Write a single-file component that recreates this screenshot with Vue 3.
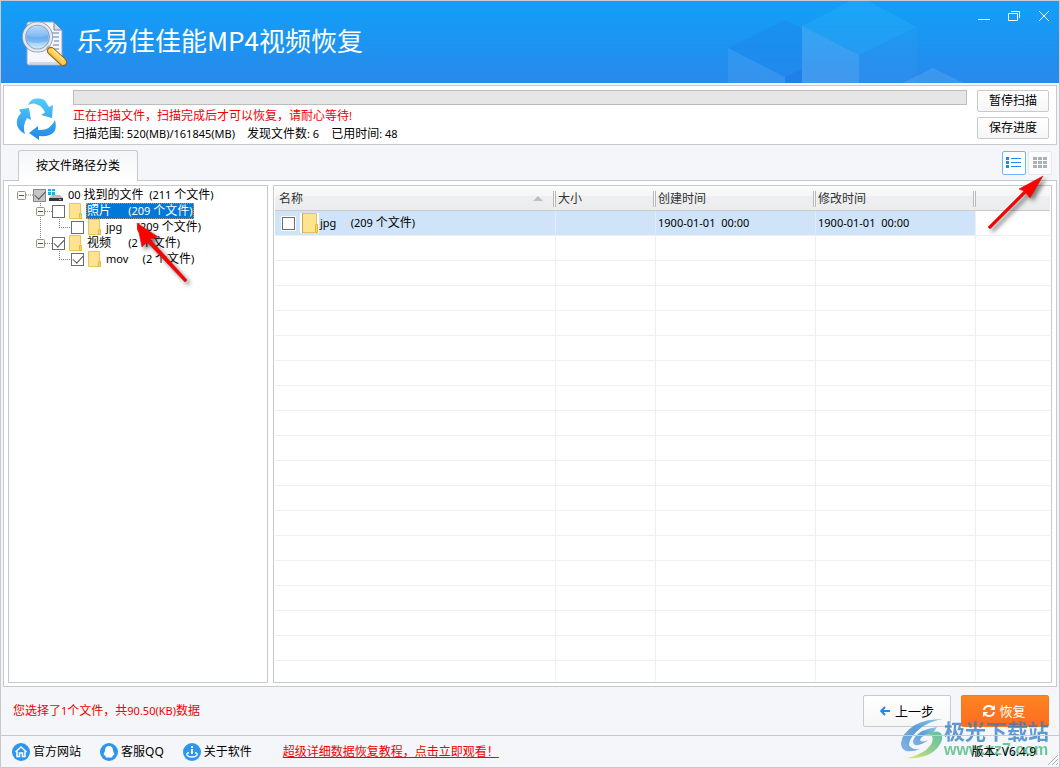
<script setup>
import { h, ref } from 'vue'

// Latin runs are set one size smaller than the Chinese text around them.
const Mixed = (props) =>
  props.text
    .split(/([\x20-\x7e]+)/)
    .filter(Boolean)
    .map((part) => (/^[\x20-\x7e]+$/.test(part) ? h('span', { class: 'latin' }, part) : part))
Mixed.props = ['text']

const tree = ref([
  { id: 'root', label: '00 找到的文件  (211 个文件)', depth: 0, box: true, checked: true, mixed: true, icon: 'drive', lines: 'M9 8H16' },
  { id: 'photo', label: '照片      (209 个文件)', depth: 1, box: true, checked: false, selected: true, icon: 'folder', lines: 'M23.5 0V16M28 8.5H35' },
  { id: 'jpg', label: 'jpg     (209 个文件)', depth: 2, box: false, checked: false, icon: 'folder', lines: 'M23.5 0V16M42.5 0V8M42 8.5H54' },
  { id: 'video', label: '视频      (2 个文件)', depth: 1, box: true, checked: true, icon: 'folder', lines: 'M23.5 0V8M28 8.5H35' },
  { id: 'mov', label: 'mov     (2 个文件)', depth: 2, box: false, checked: true, icon: 'folder', lines: 'M42.5 0V8M42 8.5H54' },
])

const columns = ['名称', '大小', '创建时间', '修改时间']
const blankRows = 40
const rowChecked = ref(false)
</script>

<template>
  <div class="window">
    <header class="titlebar">
      <svg class="cubes" width="359" height="82" viewBox="0 0 359 82" aria-hidden="true">
        <path d="M28 47L85 19L102 27V68L85 76Z" fill="#1a80ea" opacity=".3" />
        <path d="M28 47L85 76V82H28Z" fill="#fff" opacity=".07" />
        <path d="M85 76L102 68V82H85Z" fill="#1a74e8" opacity=".5" />
        <path d="M102 25L150 0H168L217 26L159 54Z" fill="#35c0f4" opacity=".22" />
        <path d="M102 25L159 54V82H102Z" fill="#fff" opacity=".12" />
        <path d="M159 54L217 26V82H159Z" fill="#fff" opacity=".025" />
        <path d="M203 82L233 67L264 82Z" fill="#fff" opacity=".1" />
      </svg>
      <svg class="logo" width="46" height="46" viewBox="0 0 46 46" aria-hidden="true">
        <defs>
          <linearGradient id="lens" x1="0" y1="0" x2="0" y2="1">
            <stop offset="0" stop-color="#c5e0fb" /><stop offset=".5" stop-color="#7db8f2" /><stop offset="1" stop-color="#d9f3fc" />
          </linearGradient>
          <linearGradient id="handle" x1="0" y1="1" x2="1" y2="0">
            <stop offset="0" stop-color="#d07a10" /><stop offset=".5" stop-color="#ffd65a" /><stop offset="1" stop-color="#e08a12" />
          </linearGradient>
        </defs>
        <path d="M6 1H32L40 9V43Q40 44 39 44H7Q5 44 5 42V2Z" fill="#f6f7fc" stroke="#8ea6c8" />
        <path d="M32 1V9H40Z" fill="#d5dcec" stroke="#6f87ad" />
        <path d="M28 12H37M31 16H37M32 20H37M31 24H37M29 28H37" stroke="#93a5c4" stroke-width="1.5" />
        <path d="M7 42H39" stroke="#d4d8e6" stroke-width="2" />
        <circle cx="15.5" cy="16" r="13.5" fill="url(#lens)" stroke="#8799ae" stroke-width="4" />
        <circle cx="15.5" cy="16" r="13.5" fill="none" stroke="#e3e9ef" stroke-width="2.4" />
        <path d="M5 14Q14 19 26 14V20Q14 24 5 20Z" fill="#4f9cec" opacity=".4" />
        <path d="M25 26L29 30" stroke="#a5acb5" stroke-width="4" />
        <path d="M29 30L41 41" stroke="#9c5c08" stroke-width="8" stroke-linecap="round" />
        <path d="M29 30L41 41" stroke="url(#handle)" stroke-width="6" stroke-linecap="round" />
        <path d="M30 28L42 39" stroke="#ffe48a" stroke-width="2" />
      </svg>
      <h1>乐易佳佳能MP4视频恢复</h1>
      <div class="win-buttons">
        <button type="button" aria-label="最小化"><svg width="12" height="12" viewBox="0 0 12 12"><path d="M0 9.5H12" /></svg></button>
        <button type="button" aria-label="还原"><svg width="12" height="12" viewBox="0 0 12 12"><path d="M.5 3.5H9.5V10.5H.5ZM3 1.5H11.5V8" /></svg></button>
        <button type="button" aria-label="关闭"><svg width="12" height="12" viewBox="0 0 12 12"><path d="M1 1L11 11M11 1L1 11" /></svg></button>
      </div>
    </header>

    <section class="scan">
      <svg class="recycle" width="42" height="44" viewBox="0 0 42 44" aria-hidden="true">
        <defs>
          <linearGradient id="cycle" gradientUnits="userSpaceOnUse" x1="0" y1="0" x2="0" y2="42">
            <stop offset="0" stop-color="#55cdfb" /><stop offset="1" stop-color="#2188e6" />
          </linearGradient>
        </defs>
        <g fill="url(#cycle)">
          <path d="M12 7Q15 0 21 .5Q28 0 30 4L33 9L37 7L36 20L25 17L29 14.5Q26 8 22 7Q18 4 12 7Z" />
          <path d="M13 10L3 11.5L5 15Q0 20 1 27Q2 32 9 36Q6 28 11 20L15 22Z" />
          <path d="M13 35L22 28V32Q34 33 39 22Q41 30 38 34Q34 39 23 38V42Z" />
        </g>
      </svg>
      <div class="scan-info">
        <div class="progress" role="progressbar" aria-label="扫描进度"></div>
        <p class="warn"><Mixed text="正在扫描文件，扫描完成后才可以恢复，请耐心等待!" /></p>
        <p class="stats">
          <span><Mixed text="扫描范围: 520(MB)/161845(MB)" /></span>
          <span><Mixed text="发现文件数: 6" /></span>
          <span><Mixed text="已用时间: 48" /></span>
        </p>
      </div>
      <div class="scan-buttons">
        <button type="button" class="plain">暂停扫描</button>
        <button type="button" class="plain">保存进度</button>
      </div>
    </section>

    <nav class="tabs">
      <button type="button" class="tab">按文件路径分类</button>
      <div class="views">
        <button type="button" class="view active" aria-label="列表视图">
          <svg width="16" height="14" viewBox="0 0 16 14"><path d="M0 1h3v3H0zM0 5h3v3H0zM0 9h3v3H0zM5 2h10v1H5zM5 6h10v1H5zM5 10h10v1H5z" fill="#2389e8" /></svg>
        </button>
        <button type="button" class="view" aria-label="缩略图视图">
          <svg width="14" height="12" viewBox="0 0 14 12"><path d="M0 0h4v3H0zM5 0h4v3H5zM10 0h4v3h-4zM0 4h4v3H0zM5 4h4v3H5zM10 4h4v3h-4zM0 8h4v3H0zM5 8h4v3H5zM10 8h4v3h-4z" fill="#abb0b6" /></svg>
        </button>
      </div>
    </nav>

    <main class="page">
      <aside class="tree">
        <ul>
          <li v-for="node in tree" :key="node.id">
            <svg class="guide" :width="node.depth * 19 + 16" height="16" aria-hidden="true">
              <path :d="node.lines" class="dots" />
              <template v-if="node.box">
                <rect :x="node.depth * 19 + 0.5" y="4.5" width="8" height="8" rx="1" class="expander" />
                <path :d="`M${node.depth * 19 + 2} 8.5h5`" stroke="#3353a5" />
              </template>
            </svg>
            <input :id="node.id" v-model="node.checked" type="checkbox" :class="{ mixed: node.mixed }" />
            <svg v-if="node.icon === 'drive'" class="node-icon" width="16" height="16" viewBox="0 0 16 16" aria-hidden="true">
              <path d="M0 2h3v2H0zM4 2h3v2H4zM0 5h3v3H0zM4 5h3v3H4z" fill="#12b4ea" />
              <path d="M4 8H12L15 11H1Z" fill="#b9bdc1" />
              <path d="M1 11H15V14H1Z" fill="#34383c" />
              <path d="M11 12h2v1h-2z" fill="#4fe36a" />
            </svg>
            <svg v-else class="node-icon" width="16" height="16" viewBox="0 0 16 16" aria-hidden="true">
              <path d="M2.5 .5H13.5V10L14.5 11V15.5H2.5Z" fill="#ffe391" stroke="#e9c45c" />
              <path d="M12.5 10.5H14.5V15.5H12.5Z" fill="#ffd75e" stroke="#e9b93f" />
            </svg>
            <label :for="node.id" :class="{ selected: node.selected }"><Mixed :text="node.label" /></label>
          </li>
        </ul>
      </aside>

      <section class="grid">
        <div class="grid-view">
          <table>
            <colgroup><col class="c-name" /><col class="c-size" /><col class="c-time" /><col class="c-time" /><col /></colgroup>
            <thead>
              <tr>
                <th v-for="(name, i) in columns" :key="name" scope="col">
                  <div class="head-cell">
                    {{ name }}
                    <svg v-if="i === 0" class="sort" width="10" height="5" viewBox="0 0 10 5" aria-hidden="true"><path d="M0 5L5 0L10 5Z" fill="#bdbfc1" /></svg>
                    <i class="grip"></i>
                  </div>
                </th>
                <td></td>
              </tr>
            </thead>
            <tbody>
              <tr class="active-row">
                <td>
                  <div class="file">
                    <input id="file-jpg" v-model="rowChecked" type="checkbox" />
                    <svg width="19" height="20" viewBox="0 0 19 20" aria-hidden="true">
                      <path d="M0 0H19V20H0Z" fill="#fff" />
                      <path d="M2.5 .5H16.5V12L17.5 13V19.5H2.5Z" fill="#ffe48f" stroke="#e6c15c" />
                      <path d="M2.5 0V20" stroke="#cfa544" />
                      <path d="M15.5 11.5H17.5V19.5H15.5Z" fill="#ffd75e" stroke="#e6b53c" />
                    </svg>
                    <label for="file-jpg"><Mixed text="jpg     (209 个文件)" /></label>
                  </div>
                </td>
                <td></td>
                <td><Mixed text="1900-01-01  00:00" /></td>
                <td><Mixed text="1900-01-01  00:00" /></td>
                <td></td>
              </tr>
              <tr v-for="n in blankRows" :key="n"><td v-for="c in 5" :key="c"></td></tr>
            </tbody>
          </table>
        </div>
      </section>
    </main>

    <section class="actions">
      <p class="warn"><Mixed text="您选择了1个文件，共90.50(KB)数据" /></p>
      <button type="button" class="plain big">
        <svg width="10" height="10" viewBox="0 0 10 10" aria-hidden="true"><path d="M10 5H1.5M5 1L1.2 5L5 9" fill="none" stroke="#2389e8" stroke-width="2" /></svg>
        上一步
      </button>
      <button type="button" class="big primary">
        <svg width="14" height="14" viewBox="0 0 14 14" aria-hidden="true">
          <path d="M2 6Q2.5 2 7 2Q10 2 11.5 4.5M12 8Q11.5 12 7 12Q4 12 2.5 9.5" fill="none" stroke="#fff" stroke-width="2" />
          <path d="M13 1V6H8ZM1 13V8H6Z" fill="#fff" />
        </svg>
        恢复
      </button>
    </section>

    <footer class="status">
      <a href="#site">
        <svg width="18" height="18" viewBox="0 0 18 18" aria-hidden="true"><circle cx="9" cy="9" r="9" fill="#2e95ed" /><path d="M3.5 9L9 4L14.5 9M5 8.5V13.5H7.5V10H10.5V13.5H13V8.5" fill="none" stroke="#fff" stroke-width="1.5" /></svg>
        官方网站
      </a>
      <a href="#service">
        <svg width="18" height="18" viewBox="0 0 18 18" aria-hidden="true"><circle cx="9" cy="9" r="9" fill="#2e95ed" /><path d="M9 3Q13 3 13 8Q15 11 14 12.5L13 12Q13 13 12 13.5Q13 14 12 14.5H6Q5 14 6 13.5Q5 13 5 12L4 12.5Q3 11 5 8Q5 3 9 3Z" fill="#fff" /></svg>
        客服QQ
      </a>
      <a href="#about">
        <svg width="18" height="18" viewBox="0 0 18 18" aria-hidden="true"><circle cx="9" cy="9" r="9" fill="#2e95ed" /><path d="M8 3h2v2H8zM8 6h2v5H8z" fill="#fff" /><path d="M6 9.5Q3.5 10 4 12Q5 14 9 14Q13 14 14 12Q14.5 10 12 9.5" fill="none" stroke="#fff" stroke-width="1.5" /></svg>
        关于软件
      </a>
      <a href="#tutorial" class="tutorial">超级详细数据恢复教程，点击立即观看！</a>
      <span class="version">版本: V6.4.9</span>
      <svg class="resize" width="10" height="10" viewBox="0 0 10 10" aria-hidden="true"><path d="M0 10L10 0M4 10L10 4M8 10L10 8" stroke="#a9adb2" /></svg>
    </footer>

    <div class="watermark">
      <svg width="43" height="42" viewBox="0 0 43 42" aria-hidden="true">
        <defs>
          <linearGradient id="swirl" x1="1" y1="0" x2="0" y2="1"><stop offset="0" stop-color="#58bde8" /><stop offset=".5" stop-color="#2f7fcb" /><stop offset="1" stop-color="#5c9fdc" /></linearGradient>
          <linearGradient id="leaf" x1="1" y1="0" x2="0" y2="1"><stop offset="0" stop-color="#2fae8c" /><stop offset=".5" stop-color="#6fc06c" /><stop offset="1" stop-color="#dde04a" /></linearGradient>
        </defs>
        <path d="M42 1Q24 1 14 7Q1 15 0 25Q0 31 5 33Q12 34 19 31Q10 32 8 27Q8 19 21 9Q30 3 42 1Z" fill="url(#swirl)" />
        <path d="M36 9Q20 11 14 19Q10 25 14 27Q20 28 27 22Q20 25 19 22Q20 17 31 15Q34 13 36 9Z" fill="url(#swirl)" />
        <path d="M31 14Q39 12 41 17Q43 25 32 34Q22 41 6 40Q18 37 25 32Q34 24 31 18Q29 16 25 17Q28 14 31 14Z" fill="url(#leaf)" />
      </svg>
      <div class="mark-text"><b>极光下载站</b><span>www.xz7.com</span></div>
    </div>

    <svg class="arrow arrow-tree" width="70" height="74" viewBox="0 0 70 74" aria-hidden="true">
      <path d="M7 6L28 20L20 22L57 63L55 65L17 25L12 30Z" />
    </svg>
    <svg class="arrow arrow-view" width="70" height="70" viewBox="0 0 70 70" aria-hidden="true">
      <path d="M58 5L45 27L41 22L5 58L3 56L39 20L34 18Z" />
    </svg>
  </div>
</template>

<style>
body {
  margin: 0;
}
.latin {
  font-size: 11px;
}
</style>

<style scoped>
* {
  box-sizing: border-box;
}
.window {
  position: relative;
  display: flex;
  flex-direction: column;
  height: 100vh;
  min-height: 400px;
  overflow: hidden;
  border: 1px solid #c8c9cd;
  background: #f5f6f9;
  color: #000;
  font: 12px/16px "Noto Sans", "Noto Sans CJK SC", sans-serif;
}
button,
input {
  margin: 0;
  font: inherit;
  color: inherit;
}
p,
ul,
h1 {
  margin: 0;
  padding: 0;
}
svg {
  flex: none;
  display: block;
}
.titlebar {
  position: relative;
  flex: none;
  display: flex;
  align-items: center;
  height: 82px;
  padding-left: 21px;
  background: linear-gradient(#10a0f8, #268bec 90%);
}
.cubes {
  position: absolute;
  top: 0;
  right: 0;
}
.logo {
  margin-top: 4px;
}
h1 {
  margin-left: 9px;
  padding-bottom: 4px;
  color: #fff;
  font: 400 26px/36px "Noto Sans CJK SC", sans-serif;
}
.win-buttons {
  position: relative;
  align-self: flex-start;
  display: flex;
  gap: 18px;
  margin: 9px 9px 0 auto;
}
.win-buttons button {
  padding: 0;
  border: 0;
  background: none;
}
.win-buttons path {
  fill: none;
  stroke: #fff;
}
.scan {
  flex: none;
  display: flex;
  margin: 2px 2px 0;
  padding: 4px 7px 1px 12px;
  border: 1px solid #c8c9cd;
  background: #fff;
}
.recycle {
  margin: 8px 15px 0 0;
}
.scan-info {
  flex: 1;
}
.progress {
  height: 15px;
  margin-bottom: 2px;
  border: 1px solid #bcbcbc;
  background: #e6e6e6;
}
.scan-info p {
  height: 18px;
  line-height: 18px;
}
.warn {
  color: #f00000;
}
.stats {
  display: flex;
  gap: 12px;
}
.scan-buttons {
  display: flex;
  flex-direction: column;
  gap: 5px;
  margin-left: 10px;
}
.plain {
  width: 72px;
  height: 22px;
  padding: 0;
  border: 1px solid #c8cace;
  border-radius: 2px;
  background: linear-gradient(#fff, #f6f6f7);
}
.tabs {
  flex: none;
  display: flex;
  justify-content: space-between;
  height: 35px;
  padding: 5px 7px 0 17px;
}
.tab {
  position: relative;
  width: 120px;
  height: 31px;
  padding: 0;
  border: 1px solid #c8c9cd;
  border-bottom: 0;
  border-radius: 3px 3px 0 0;
  background: linear-gradient(#f4f5f7, #fff);
}
.views {
  display: flex;
  gap: 2px;
  padding-top: 1px;
}
.view {
  display: flex;
  align-items: center;
  justify-content: center;
  width: 24px;
  height: 24px;
  padding: 0;
  border: 1px solid #e6e7e9;
  border-radius: 2px;
  background: #fafbfc;
}
.view.active {
  border-color: #6bb6f6;
  background: #fff;
}
.page {
  flex: 1;
  display: flex;
  gap: 5px;
  min-height: 0;
  margin: 0 2px;
  padding: 4px 4px 3px;
  border: 1px solid #c8c9cd;
  background: #fff;
}
.tree {
  flex: none;
  width: 260px;
  padding: 1px 0 0 8px;
  border: 1px solid #c8c9cd;
}
.tree ul {
  list-style: none;
}
.tree li {
  display: flex;
  align-items: center;
  height: 16px;
}
.dots {
  fill: none;
  stroke: #808080;
  stroke-dasharray: 1 1;
}
.expander {
  fill: #fafafa;
  stroke: #919191;
}
input[type="checkbox"] {
  appearance: none;
  flex: none;
  display: grid;
  place-items: center;
  width: 13px;
  height: 13px;
  border: 1px solid #6c6c6c;
  background: #fff;
}
input[type="checkbox"]:checked::after {
  content: "";
  width: 9px;
  height: 5px;
  margin-bottom: 2px;
  border: solid #555;
  border-width: 0 0 1px 1px;
  transform: rotate(-47deg);
}
input[type="checkbox"].mixed {
  border-color: #8a8a8a;
  background: #c6c6c6;
}
.node-icon {
  margin: 0 3px 0 2px;
}
label {
  white-space: pre;
}
.tree label {
  height: 16px;
  padding: 0 1px;
}
.tree .selected {
  outline: 1px dotted #e08a3c;
  outline-offset: -1px;
  background: #0078d7;
  color: #fff;
}
.grid {
  flex: 1;
  min-width: 0;
  padding: 1px;
  border: 1px solid #c8c9cd;
}
.grid-view {
  height: 100%;
  overflow: hidden;
}
table {
  width: 100%;
  table-layout: fixed;
  border-collapse: separate;
  border-spacing: 0;
}
.c-name {
  width: 281px;
}
.c-size {
  width: 100px;
}
.c-time {
  width: 160px;
}
th,
td {
  height: 25px;
  padding: 0 0 0 2px;
  border: solid #efefef;
  border-width: 0 1px 1px 0;
  font-weight: 400;
  line-height: 16px;
  text-align: left;
  white-space: pre;
}
td:last-child {
  border-right: 0;
}
thead th,
thead td {
  height: 24px;
  border-right: 0;
  border-bottom-color: #ccc9c8;
  background: linear-gradient(#fafafa 0, #f6f6f7 38%, #eeeff0 39%, #ebeced);
  color: #333;
}
th:first-child {
  padding-left: 4px;
}
td:first-child {
  padding-left: 0;
}
.head-cell {
  display: flex;
  align-items: center;
  justify-content: space-between;
  white-space: normal;
}
.sort {
  margin: 0 10px 0 auto;
}
.grip {
  width: 3px;
  height: 16px;
  border: solid #b9babc;
  border-width: 0 1px;
  background: #f8f8f8;
}
.active-row td:not(:last-child) {
  border-right-color: #e4ebf3;
  background: #cfe3f9;
}
.active-row td:nth-child(4) {
  border-right-color: #efefef;
}
.file {
  display: flex;
  align-items: center;
  padding-left: 7px;
}
.file input {
  margin-right: 5px;
  box-shadow: 0 0 0 1px #fff;
}
.file label {
  margin-left: 1px;
}
.actions {
  flex: none;
  display: flex;
  align-items: center;
  gap: 10px;
  height: 48px;
  padding: 0 10px 0 12px;
}
.actions p {
  flex: 1;
}
.big {
  display: flex;
  align-items: center;
  justify-content: center;
  gap: 5px;
  width: 88px;
  height: 32px;
  font-size: 13px;
}
.primary {
  gap: 3px;
  padding: 0 2px 0 0;
  border: 1px solid #f97a1c;
  border-radius: 2px;
  background: linear-gradient(#fd8420, #fd6c22);
  color: #fff;
}
.status {
  position: relative;
  z-index: 2;
  flex: none;
  display: flex;
  align-items: center;
  height: 32px;
  padding: 0 1px 0 11px;
  border-top: 1px solid #c8c9cd;
}
.status a {
  display: flex;
  align-items: center;
  gap: 3px;
  margin-right: 19px;
  color: #000;
  text-decoration: none;
}
.status .tutorial {
  display: block;
  margin-left: 12px;
  color: #f00000;
  text-decoration: underline;
}
.version {
  margin-left: auto;
}
.resize {
  align-self: flex-end;
  margin: 0 0 2px 12px;
}
.watermark {
  position: absolute;
  right: 10px;
  bottom: 7px;
  z-index: 1;
  display: flex;
  align-items: center;
  opacity: .75;
}
.mark-text {
  display: flex;
  flex-direction: column;
}
.mark-text b {
  color: #2f7cc6;
  font: 700 21px/22px "Noto Sans CJK SC", sans-serif;
}
.mark-text span {
  color: #42b87c;
  font: 700 16px/18px "Liberation Sans", Arial, sans-serif;
}
.arrow {
  position: absolute;
  z-index: 3;
  fill: #ff0000;
  stroke: #c22020;
  stroke-width: .6;
  filter: drop-shadow(3px 3px 2px rgba(0, 0, 0, .5));
  pointer-events: none;
}
.arrow-tree {
  top: 216px;
  left: 129px;
}
.arrow-view {
  top: 170px;
  right: 4px;
}
</style>
